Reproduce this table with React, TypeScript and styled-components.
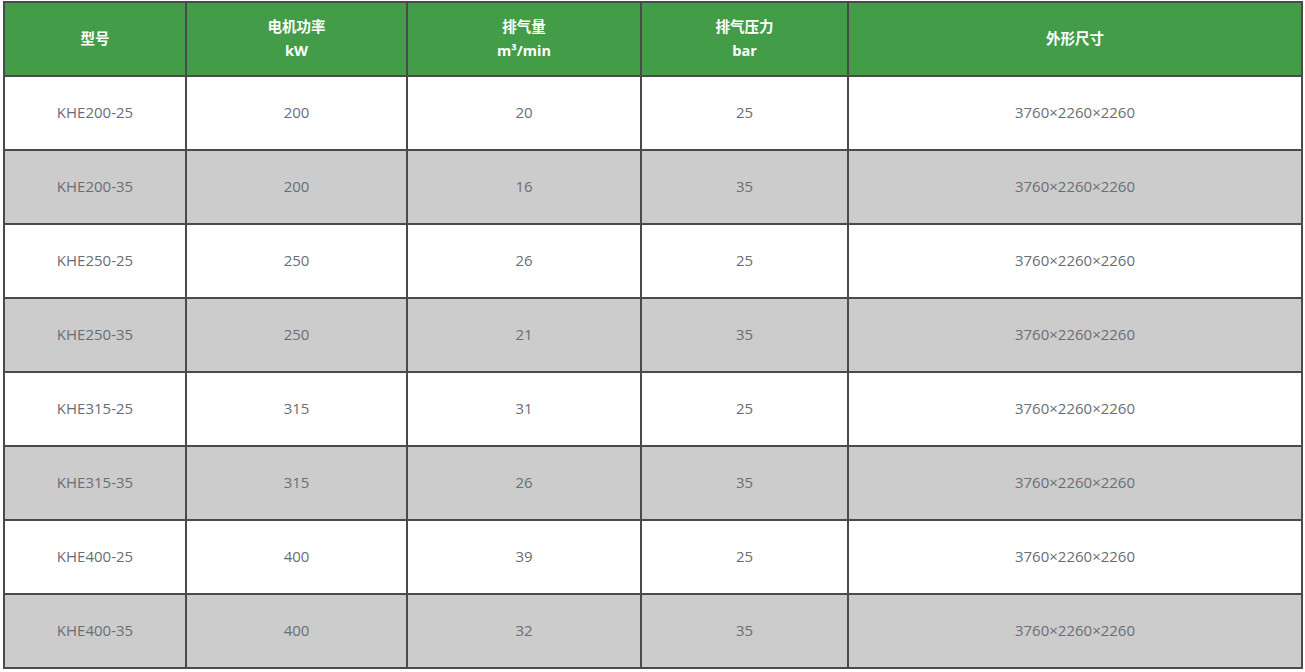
import React from "react";
import styled, { createGlobalStyle } from "styled-components";

const Global = createGlobalStyle`
  html, body { margin: 0; padding: 0; background: #ffffff; }
  body { padding: 1px 3px 0 3px; font-family: "Open Sans", "Noto Sans CJK SC", sans-serif; }
`;

const Table = styled.table`
  border-collapse: separate;
  border-spacing: 0;
  border: 1px solid #4a4a4a;
  table-layout: fixed;
  width: 1300px;
  font-size: 15px;
`;

const Th = styled.th<{ $w: number }>`
  box-sizing: border-box;
  width: ${(p) => p.$w}px;
  height: 74px;
  padding: 0 0 1px 0;
  border: 1px solid #4a4a4a;
  background: #439c47;
  color: #ffffff;
  font-size: 14.5px;
  font-weight: 700;
  line-height: 24px;
  text-align: center;
  vertical-align: middle;
  font-family: "Open Sans", "Noto Sans CJK SC", sans-serif;
`;

const Tr = styled.tr<{ $alt: boolean }>`
  background: ${(p) => (p.$alt ? "#cccccc" : "#ffffff")};
`;

const Td = styled.td`
  box-sizing: border-box;
  height: 74px;
  padding: 0 0 2px 0;
  border: 1px solid #4a4a4a;
  color: #6a6e74;
  text-align: center;
  vertical-align: middle;
  line-height: 20px;
`;

const heads: { w: number; lines: string[] }[] = [
  { w: 182, lines: ["型号"] },
  { w: 221, lines: ["电机功率", "kW"] },
  { w: 234, lines: ["排气量", "m³/min"] },
  { w: 207, lines: ["排气压力", "bar"] },
  { w: 454, lines: ["外形尺寸"] },
];

const rows = [
  ["KHE200-25", "200", "20", "25"],
  ["KHE200-35", "200", "16", "35"],
  ["KHE250-25", "250", "26", "25"],
  ["KHE250-35", "250", "21", "35"],
  ["KHE315-25", "315", "31", "25"],
  ["KHE315-35", "315", "26", "35"],
  ["KHE400-25", "400", "39", "25"],
  ["KHE400-35", "400", "32", "35"],
];

export default function App() {
  return (
    <>
      <Global />
      <Table>
        <thead>
          <tr>
            {heads.map((h, i) => (
              <Th key={i} $w={h.w}>
                {h.lines.map((l, j) => (
                  <React.Fragment key={j}>
                    {j > 0 && <br />}
                    {l}
                  </React.Fragment>
                ))}
              </Th>
            ))}
          </tr>
        </thead>
        <tbody>
          {rows.map((r, i) => (
            <Tr key={i} $alt={i % 2 === 1}>
              {r.map((c, j) => (
                <Td key={j}>{c}</Td>
              ))}
              <Td>3760×2260×2260</Td>
            </Tr>
          ))}
        </tbody>
      </Table>
    </>
  );
}
